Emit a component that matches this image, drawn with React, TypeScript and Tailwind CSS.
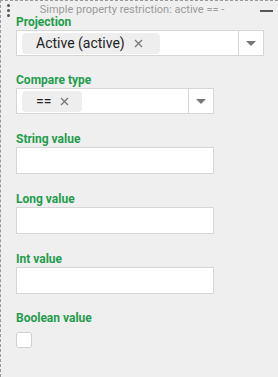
import { useState } from 'react';

const green = 'text-[#1f9d4c]';

function ChipX() {
  return (
    <svg width="9" height="9" viewBox="0 0 9 9" className="ml-[9px] shrink-0">
      <path d="M1 1L8 8M8 1L1 8" stroke="#7a7a7a" strokeWidth="1.4" />
    </svg>
  );
}

function Caret() {
  return (
    <svg width="10" height="5" viewBox="0 0 10 5">
      <path d="M0 0H10L5 5Z" fill="#777" />
    </svg>
  );
}

function Label({ children, className = '' }: { children: React.ReactNode; className?: string }) {
  return (
    <div className={`text-[12px] leading-[14px] font-bold ${green} ${className}`}>{children}</div>
  );
}

function ChipSelect({ value, width, chipWidth }: { value: string; width: string; chipWidth: string }) {
  return (
    <div className={`mt-px flex h-[26px] ${width} border border-[#d6d6d6] bg-white`}>
      <div className="flex flex-1 items-center pl-[5px]">
        <div className={`flex h-[21px] ${chipWidth} items-center rounded-[4px] bg-[#eeeeee] pl-[14px] text-[14px] text-[#222]`}>
          <span className="leading-none">{value}</span>
          <ChipX />
        </div>
      </div>
      <div className="flex w-[25px] items-center justify-center border-l border-[#d6d6d6]">
        <Caret />
      </div>
    </div>
  );
}

function TextField({ label }: { label: string }) {
  const [v, setV] = useState('');
  return (
    <div className="mt-[18px]">
      <Label>{label}</Label>
      <input
        value={v}
        onChange={(e) => setV(e.target.value)}
        className="mt-px block h-[27px] w-[198px] border border-[#d6d6d6] bg-white px-1 text-[13px] outline-none"
      />
    </div>
  );
}

export default function App() {
  const [checked, setChecked] = useState(false);

  return (
    <div
      className="min-h-screen w-full bg-[#efefef] pl-[15px] pt-0"
      style={{ fontFamily: 'Roboto, "Noto Sans", sans-serif' }}
    >
      <div className="relative -ml-[15px] min-h-[377px] border-l border-t border-dashed border-[#9a9a9a] pl-[15px]">
        {/* header */}
        <div className="flex h-[14px] items-center">
          <div className="absolute left-[6px] top-[3px] flex flex-col gap-[2px]">
            <span className="h-[3px] w-[3px] rounded-full bg-[#555]" />
            <span className="h-[3px] w-[3px] rounded-full bg-[#555]" />
            <span className="h-[3px] w-[3px] rounded-full bg-[#555]" />
          </div>
          <div className="flex-1 pr-[30px] pt-[3px] text-center text-[11px] leading-[12px] text-[#9b9b9b]">
            Simple property restriction: active == -
          </div>
          <span className="absolute right-[5px] top-[9px] h-[2px] w-[13px] bg-[#555]" />
        </div>

        <Label>Projection</Label>
        <ChipSelect value="Active (active)" width="w-[248px]" chipWidth="w-[138px]" />

        <div className="mt-[17px]">
          <Label>Compare type</Label>
          <ChipSelect value="==" width="w-[198px]" chipWidth="w-[60px]" />
        </div>

        <TextField label="String value" />
        <TextField label="Long value" />
        <TextField label="Int value" />

        <div className="mt-[17px]">
          <Label>Boolean value</Label>
          <button
            type="button"
            onClick={() => setChecked(!checked)}
            className="mt-[7px] block h-[16px] w-[16px] rounded-[3px] border border-[#d0d0d0] bg-white"
          >
            {checked && <span className="block text-[11px] leading-[14px] text-[#1f9d4c]">✓</span>}
          </button>
        </div>
      </div>
    </div>
  );
}
